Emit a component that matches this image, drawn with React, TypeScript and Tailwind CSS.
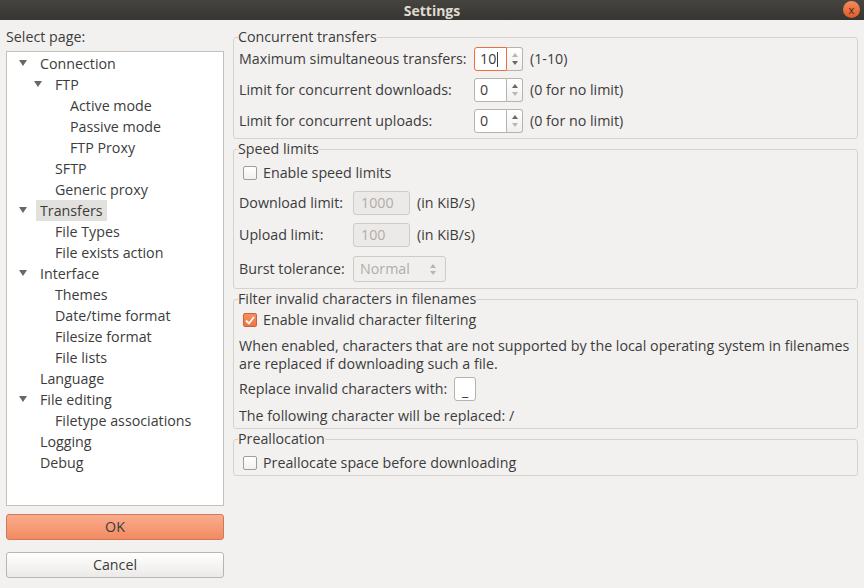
import React from "react";

type Node = { label: string; level: number; open?: boolean; selected?: boolean };

const tree: Node[] = [
  { label: "Connection", level: 0, open: true },
  { label: "FTP", level: 1, open: true },
  { label: "Active mode", level: 2 },
  { label: "Passive mode", level: 2 },
  { label: "FTP Proxy", level: 2 },
  { label: "SFTP", level: 1 },
  { label: "Generic proxy", level: 1 },
  { label: "Transfers", level: 0, open: true, selected: true },
  { label: "File Types", level: 1 },
  { label: "File exists action", level: 1 },
  { label: "Interface", level: 0, open: true },
  { label: "Themes", level: 1 },
  { label: "Date/time format", level: 1 },
  { label: "Filesize format", level: 1 },
  { label: "File lists", level: 1 },
  { label: "Language", level: 0 },
  { label: "File editing", level: 0, open: true },
  { label: "Filetype associations", level: 1 },
  { label: "Logging", level: 0 },
  { label: "Debug", level: 0 },
];

const indent = ["pl-[33px]", "pl-[48px]", "pl-[63px]"];
const arrowPos = ["left-[12px]", "left-[27px]", "left-[42px]"];

const Expander = ({ className }: { className: string }) => (
  <svg className={`absolute top-[7px] ${className}`} width="8" height="7" viewBox="0 0 8 7">
    <path d="M0 0 H8 L4 6 Z" fill="#6a6864" />
  </svg>
);

const Arrow = ({ up, dim }: { up?: boolean; dim?: boolean }) => (
  <svg width="6" height="4" viewBox="0 0 6 4">
    <path d={up ? "M0 4 L3 0 L6 4 Z" : "M0 0 L6 0 L3 4 Z"} fill={dim ? "#b9b6b1" : "#6a6864"} />
  </svg>
);

function Spin({ value, focused, max }: { value: string; focused?: boolean; max?: boolean }) {
  return (
    <div className="flex h-[24px] w-[49px]">
      <div
        className={`flex flex-1 items-center rounded-l-[3px] border bg-white pl-[5px] ${
          focused ? "border-[#e9703d]" : "border-[#b6b3ae]"
        }`}
      >
        {value}
        {focused && <span className="ml-[1px] h-[15px] w-[1px] bg-[#3c3c3c]" />}
      </div>
      <div className="flex w-[16px] flex-col items-center justify-center gap-[4px] rounded-r-[3px] border border-l-0 border-[#b6b3ae] bg-gradient-to-b from-white to-[#f1f0ee]">
        <Arrow up dim={max} />
        <Arrow dim={!max} />
      </div>
    </div>
  );
}

function Check({ checked }: { checked?: boolean }) {
  if (checked)
    return (
      <span className="flex h-[14px] w-[14px] items-center justify-center rounded-[2px] border border-[#c9633b] bg-gradient-to-b from-[#f5905f] to-[#ee7541]">
        <svg width="10" height="9" viewBox="0 0 10 9">
          <path d="M1 4.5 L4 7.5 L9 1" stroke="#fff" strokeWidth="1.8" fill="none" />
        </svg>
      </span>
    );
  return (
    <span className="h-[14px] w-[14px] rounded-[2px] border border-[#a09d98] bg-gradient-to-b from-white to-[#f1f0ee]" />
  );
}

function Group({ title, children, className = "" }: { title: string; children: React.ReactNode; className?: string }) {
  return (
    <fieldset className={`rounded-[3px] border border-[#d6d3cf] pl-[5px] pr-[5px] ${className}`}>
      <legend className="-ml-[1px] px-0 leading-[18px]">{title}</legend>
      {children}
    </fieldset>
  );
}

export default function App() {
  return (
    <div
      className="flex h-[588px] w-[864px] flex-col overflow-hidden bg-[#f2f1f0] text-[14.25px] text-[#3c3c3c]"
      style={{ fontFamily: '"Open Sans", "Noto Sans", sans-serif' }}
    >
      {/* title bar */}
      <div className="relative flex h-[20px] items-center justify-center bg-gradient-to-b from-[#46443f] to-[#363531] text-[14px] font-bold text-[#dfdbd2]">
        Settings
        <span className="absolute right-[4px] top-[1px] flex h-[17px] w-[17px] items-center justify-center rounded-full bg-gradient-to-b from-[#f48a5d] to-[#de5a26] text-[11px] font-normal leading-none text-[#3b2a20]">
          x
        </span>
      </div>

      <div className="flex flex-1">
        {/* left column */}
        <div className="flex w-[230px] flex-col pl-[6px] pr-[6px] pt-[8px]">
          <div className="leading-[18px]">Select page:</div>
          <div className="mt-[5px] h-[455px] border border-[#c3c0bb] bg-white pt-[1px]">
            {tree.map((n) => (
              <div key={n.label} className={`relative flex h-[21px] items-center ${indent[n.level]}`}>
                {n.open && <Expander className={arrowPos[n.level]} />}
                <span className={n.selected ? "-ml-[4px] bg-[#e3e1de] px-[4px] leading-[21px]" : ""}>{n.label}</span>
              </div>
            ))}
          </div>
          <div className="mt-[8px] flex h-[26px] items-center justify-center rounded-[3px] border border-[#cf7a56] bg-gradient-to-b from-[#f9ac8c] to-[#f38a61]">
            OK
          </div>
          <div className="mt-[12px] flex h-[26px] items-center justify-center rounded-[3px] border border-[#b9b6b1] bg-gradient-to-b from-white to-[#ebeae8]">
            Cancel
          </div>
        </div>

        {/* right column */}
        <div className="flex w-[628px] flex-col pl-[3px] pt-[8px]">
          <Group title="Concurrent transfers" className="pb-[5px]">
            <div className="mt-[1px] flex flex-col gap-[7px]">
              <div className="flex h-[24px] items-center">
                <span className="w-[235px]">Maximum simultaneous transfers:</span>
                <Spin value="10" focused max />
                <span className="ml-[7px]">(1-10)</span>
              </div>
              <div className="flex h-[24px] items-center">
                <span className="w-[235px]">Limit for concurrent downloads:</span>
                <Spin value="0" />
                <span className="ml-[7px]">(0 for no limit)</span>
              </div>
              <div className="flex h-[24px] items-center">
                <span className="w-[235px]">Limit for concurrent uploads:</span>
                <Spin value="0" />
                <span className="ml-[7px]">(0 for no limit)</span>
              </div>
            </div>
          </Group>

          <Group title="Speed limits" className="mt-[1px] pb-[6px]">
            <label className="mt-[3px] flex h-[24px] items-center gap-[6px] pl-[4px]">
              <Check />
              Enable speed limits
            </label>
            <div className="mt-[6px] flex h-[24px] items-center">
              <span className="w-[114px]">Download limit:</span>
              <span className="flex h-[24px] w-[57px] items-center rounded-[3px] border border-[#cfccc8] bg-[#eceae8] pl-[7px] text-[#b0ada9]">
                1000
              </span>
              <span className="ml-[7px]">(in KiB/s)</span>
            </div>
            <div className="mt-[8px] flex h-[24px] items-center">
              <span className="w-[114px]">Upload limit:</span>
              <span className="flex h-[24px] w-[57px] items-center rounded-[3px] border border-[#cfccc8] bg-[#eceae8] pl-[7px] text-[#b0ada9]">
                100
              </span>
              <span className="ml-[7px]">(in KiB/s)</span>
            </div>
            <div className="mt-[9px] flex h-[26px] items-center">
              <span className="w-[114px]">Burst tolerance:</span>
              <span className="flex h-[26px] w-[93px] items-center justify-between rounded-[3px] border border-[#cfccc8] bg-[#f0efed] pl-[6px] pr-[9px] text-[#b0ada9]">
                Normal
                <span className="flex flex-col gap-[3px]">
                  <Arrow up dim />
                  <Arrow dim />
                </span>
              </span>
            </div>
          </Group>

          <Group title="Filter invalid characters in filenames" className="mt-[1px] pb-[2px]">
            <label className="flex h-[24px] items-center gap-[6px] pl-[4px]">
              <Check checked />
              Enable invalid character filtering
            </label>
            <p className="mt-[5px] leading-[18px]">
              When enabled, characters that are not supported by the local operating system in filenames
              <br />
              are replaced if downloading such a file.
            </p>
            <div className="mt-[4px] flex h-[24px] items-center gap-[7px]">
              <span>Replace invalid characters with:</span>
              <span className="flex h-[24px] w-[22px] items-end justify-center rounded-[3px] border border-[#b6b3ae] bg-white pb-[2px] leading-none">
                _
              </span>
            </div>
            <div className="mt-[5px] leading-[20px]">The following character will be replaced: /</div>
          </Group>

          <Group title="Preallocation" className="mt-[1px]">
            <label className="mt-[3px] flex h-[24px] items-center gap-[6px] pl-[4px]">
              <Check />
              Preallocate space before downloading
            </label>
          </Group>
        </div>
      </div>
    </div>
  );
}
